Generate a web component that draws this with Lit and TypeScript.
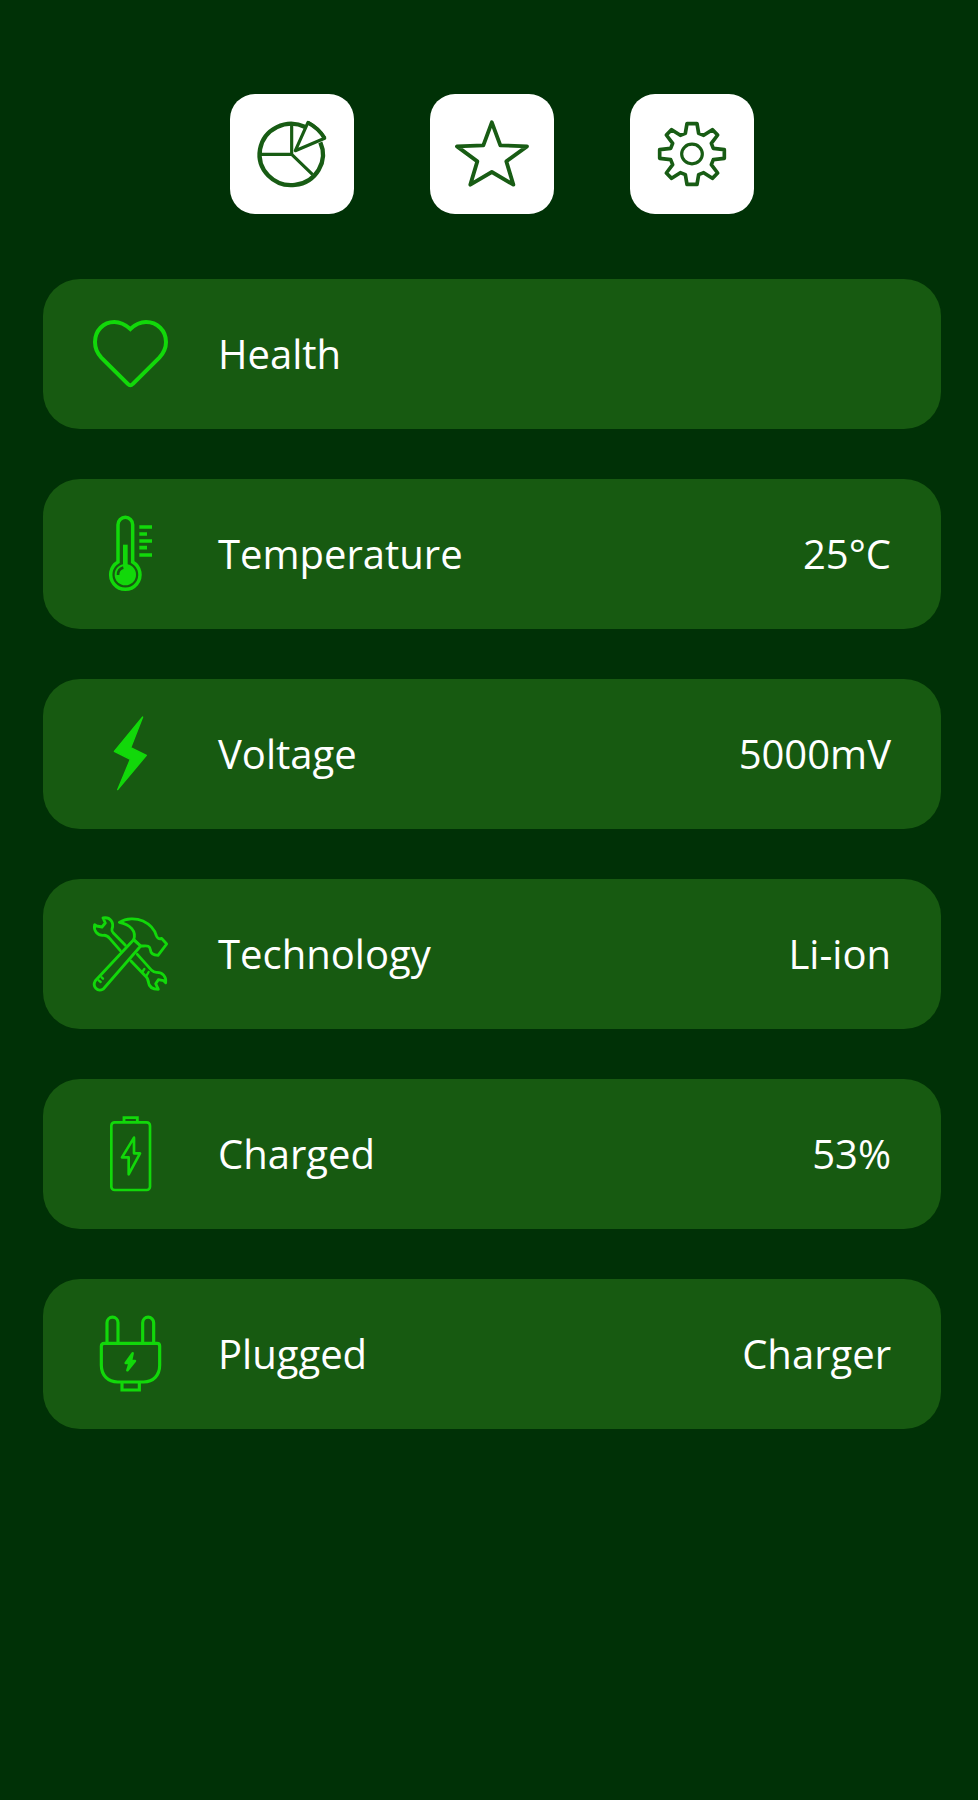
import { LitElement, html, svg, css } from "lit";
import { customElement } from "lit/decorators.js";

const chart = svg`
  <path d="M256 129A95 92 0 1 0 301 175" stroke-width="13"/>
  <path d="M215 122V211H122M215 211L278 272" stroke-width="9.500"/>
  <path d="M226 200L264 115Q297 133 314 163Z" stroke-width="9.500" stroke-linejoin="round"/>
  <path d="M264 116Q297 133 314 163" stroke-width="12"/>`;

const star = svg`
  <path d="M215.500 115L241 184L321 187L259 232L280 302L215.500 264L151 302L172 232L111 187L190 184Z" stroke-width="11.500" stroke-linejoin="round"/>`;

const gear = svg`
  <path d="M201 119H231L236 148L251 154L277 137L293 153L274 178L280 193L313 197V223L280 227L274 242L293 267L277 283L251 266L236 272L231 301H201L196 272L181 266L155 283L139 267L158 242L152 227L119 223V197L152 193L158 178L139 153L155 137L181 154L196 148Z" stroke-width="11" stroke-linejoin="round"/>
  <ellipse cx="216" cy="210" rx="31" ry="29.500" stroke-width="9.500"/>`;

const heart = svg`
  <path d="M301 177C284 162 270 156 253 156C220 156 195 182 195 216C195 236 202 250 214 263L294 342Q301 350 308 342L388 263C400 250 408 236 408 216C408 182 382 156 348 156C331 156 317 162 301 177Z" stroke-width="12"/>`;

const thermometer = svg`
  <path d="M114 186V74A22 22 0 0 1 158 74V186A44 44 0 1 1 114 186Z" stroke-width="10.500"/>
  <circle cx="136" cy="224" r="32" fill="currentColor" stroke="none"/>
  <path d="M136 134V205" stroke-width="14"/>
  <path class="cut" d="M114 225Q114 207 130 203" stroke-width="8"/>
  <path d="M178 81H216M178 102H201M178 123H216M178 143H201M178 165H216" stroke-width="11"/>`;

const bolt = svg`
  <path d="M188 51L103 154L151 178L113 269L199 166L152 143Z" fill="currentColor" stroke-width="4" stroke-linejoin="round"/>`;

const tools = svg`
  <g stroke-width="8.500" stroke-linecap="round" stroke-linejoin="round">
    <path d="M161 107L46 230C36 248 52 265 70 255L182 126Z"/>
    <path d="M118 55C139 42 168 42 189 51C212 62 224 77 229 95C232 104 238 106 245 103L260 120L234 154C220 154 212 147 211 137C210 127 202 124 190 126H182L161 107C170 82 151 61 118 55Z"/>
    <path d="M69 42L76 57L66 69L50 66L44 62C40 80 52 95 70 94C79 93 84 97 89 103L121 140M69 42C91 38 103 56 96 75Q94 81 100 87L136 124"/>
    <path d="M153 171L196 216Q205 224 205 234C207 249 219 256 235 256L227 239L235 227L251 230L257 236C260 218 247 204 229 205Q221 205 215 199L172 151"/>
    <path d="M187 204L193 195M200 214L206 204M56 229L62 234M65 220L69 224" stroke-width="7"/>
  </g>`;

const battery = svg`
  <rect x="94" y="55" width="116" height="203" rx="10" stroke-width="8"/>
  <path d="M132 55V41H172V55" stroke-width="8.500"/>
  <path d="M162 101L126 160H146V211L180 148H162Z" stroke-width="8" stroke-linejoin="round"/>`;

const plug = svg`
  <path d="M73 118H231Q239 118 239 126V184C239 214 220 234 191 234H113C84 234 64 214 64 184V127Q64 118 73 118Z" stroke-width="9.500"/>
  <path d="M81 117V56A16.500 16.500 0 0 1 114 56V117M188 117V56A16.500 16.500 0 0 1 221 56V117M126 235V258H178V235" stroke-width="9.500"/>
  <path d="M158 148L137 177H149L142 199L165 171H153Z" fill="currentColor" stroke-width="7.500" stroke-linejoin="round"/>`;

const actions = [
  { label: "Usage", art: chart },
  { label: "Favorites", art: star },
  { label: "Settings", art: gear },
];

const rows = [
  { label: "Health", value: "", art: heart, box: "150 102 300 300" },
  { label: "Temperature", value: "25°C", art: thermometer, box: "0 12 300 300" },
  { label: "Voltage", value: "5000mV", art: bolt, box: "0 12 300 300" },
  { label: "Technology", value: "Li-ion", art: tools, box: "0 0 300 300" },
  { label: "Charged", value: "53%", art: battery, box: "0 0 300 300" },
  { label: "Plugged", value: "Charger", art: plug, box: "0 0 300 300" },
];

@customElement("app-root")
export class AppRoot extends LitElement {
  static styles = css`
    :host {
      display: block;
      box-sizing: border-box;
      min-height: 1800px;
      padding: 94px 37px 0 43px;
      background: #003106;
      color: #fff;
      font: 40px/54px "Open Sans", "Noto Sans", sans-serif;
    }
    .actions {
      display: flex;
      justify-content: center;
      gap: 76px;
      margin-bottom: 65px;
    }
    .action {
      width: 124px;
      height: 120px;
      padding: 0;
      border: 0;
      border-radius: 25px;
      background: #fff;
      color: #185c14;
    }
    .list {
      display: flex;
      flex-direction: column;
      gap: 50px;
    }
    .card {
      display: flex;
      align-items: center;
      box-sizing: border-box;
      height: 150px;
      padding: 0 50px 0 37px;
      border-radius: 37px;
      background: #175a11;
    }
    svg {
      display: block;
      fill: none;
      stroke: currentColor;
    }
    .action svg {
      width: 124px;
      height: 120px;
    }
    .card svg {
      width: 100px;
      height: 100px;
      margin-right: 38px;
      color: #12d80a;
    }
    .card .cut {
      stroke: #175a11;
    }
    .value {
      margin-left: auto;
    }
  `;

  render() {
    return html`
      <nav class="actions">
        ${actions.map(
          (a) => html`<button class="action" aria-label=${a.label}>
            <svg viewBox="30 30 372 360">${a.art}</svg>
          </button>`
        )}
      </nav>
      <main class="list">
        ${rows.map(
          (r) => html`<section class="card">
            <svg viewBox=${r.box}>${r.art}</svg>
            <span>${r.label}</span>
            <span class="value">${r.value}</span>
          </section>`
        )}
      </main>
    `;
  }
}
